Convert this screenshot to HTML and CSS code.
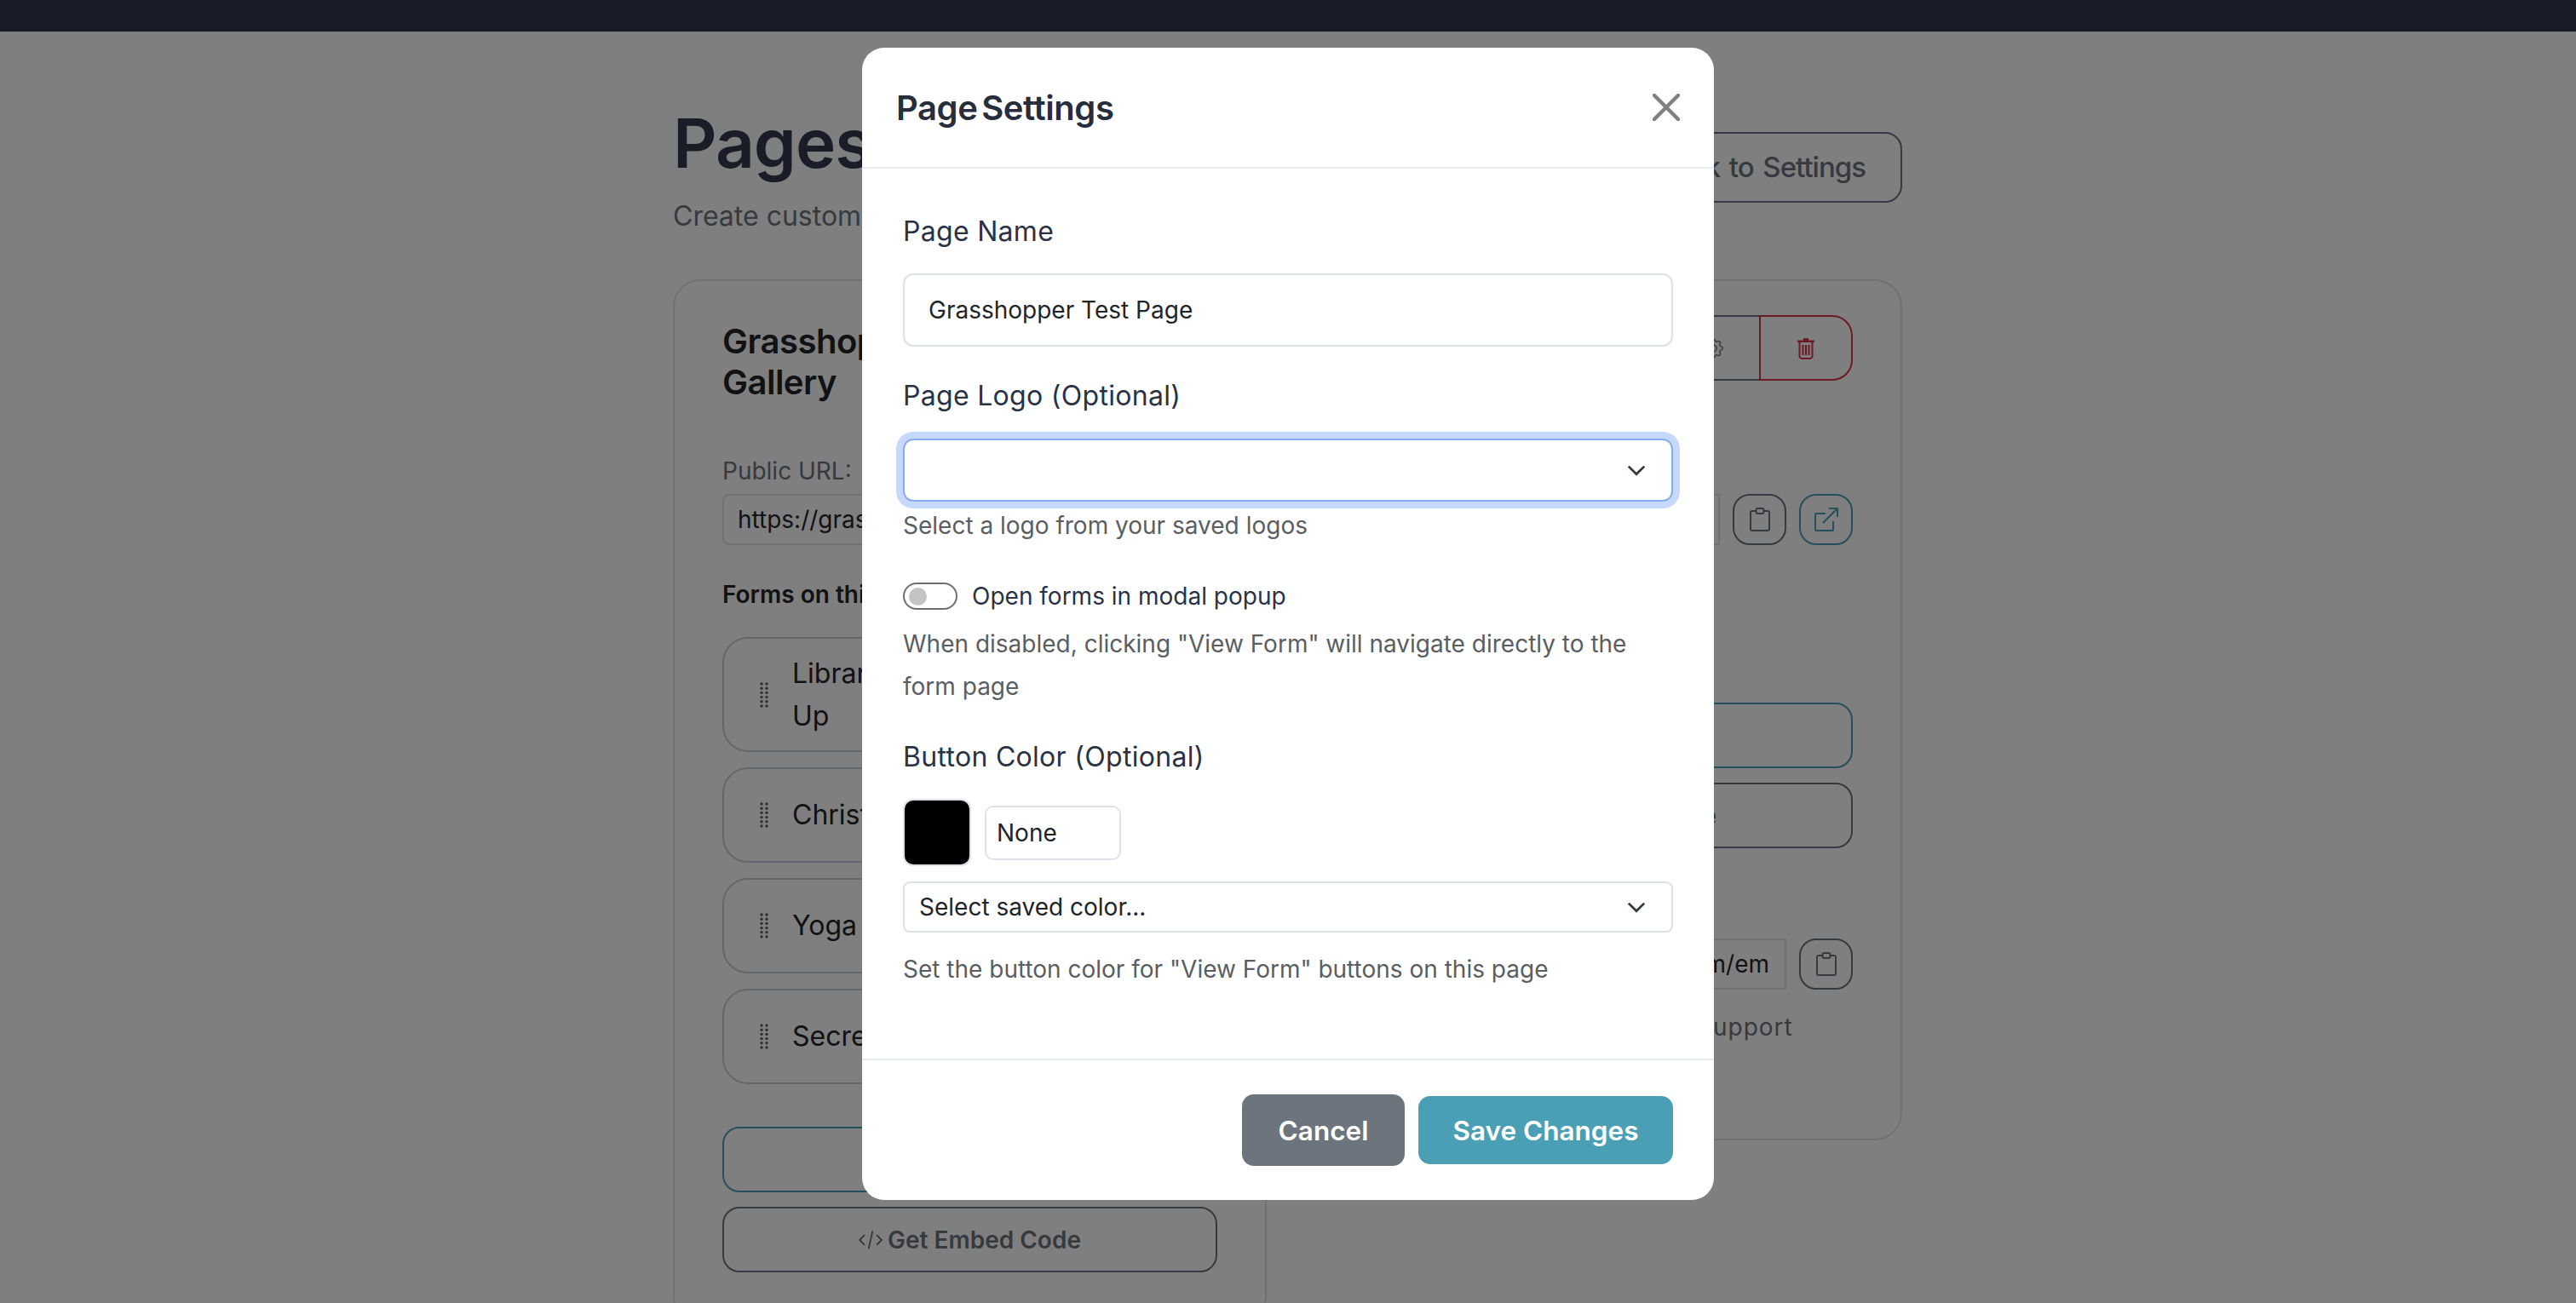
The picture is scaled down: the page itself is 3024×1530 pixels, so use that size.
FILE: index.html
```html
<!DOCTYPE html>
<html lang="en">
<head>
<meta charset="utf-8">
<title>Pages</title>
<link rel="stylesheet" href="styles.css">
</head>
<body>
<nav class="topbar"></nav>
<main class="page">
  <header class="page-head">
    <div>
      <h1 class="page-title">Pages</h1>
      <p class="page-sub">Create custom pages with multiple forms</p>
    </div>
    <a class="btn btn-back">Back to Settings</a>
  </header>
  <section class="cards">
    <article class="card">
      <div class="card-top">
        <h2 class="card-title">Grasshopper Gallery</h2>
        <div class="actions">
          <span class="act"><svg class="ic-gear" viewBox="0 0 16 16"><use href="#gear"/></svg></span>
          <span class="act act-del"><svg class="ic-trash" viewBox="0 0 22 26"><use href="#trash"/></svg></span>
        </div>
      </div>
      <div class="field-label">Public URL:</div>
      <div class="url-row">
        <div class="url-box">https://grasshopper.test/p</div>
        <span class="sq"><svg class="ic-clip" viewBox="0 0 24 28"><use href="#clip"/></svg></span>
        <span class="sq sq-teal"><svg class="ic-open" viewBox="0 0 28 28"><use href="#open"/></svg></span>
      </div>
      <div class="forms-label">Forms on this page:</div>
      <ul class="forms">
        <li class="form-item"><svg class="grip" viewBox="0 0 10 30"><use href="#grip"/></svg><span>Library Card Sign<br>Up</span></li>
        <li class="form-item form-short"><svg class="grip" viewBox="0 0 10 30"><use href="#grip"/></svg><span>Christmas Party</span></li>
        <li class="form-item form-short"><svg class="grip" viewBox="0 0 10 30"><use href="#grip"/></svg><span>Yoga Class</span></li>
        <li class="form-item form-short"><svg class="grip" viewBox="0 0 10 30"><use href="#grip"/></svg><span>Secret Santa</span></li>
      </ul>
      <a class="btn wide wide-teal">View Page</a>
      <a class="btn wide"><svg class="ic-code" viewBox="0 0 24 20"><use href="#code"/></svg>Get Embed Code</a>
    </article>
    <article class="card card-right">
      <div class="card-top">
        <h2 class="card-title">Grasshopper Test Page</h2>
        <div class="actions">
          <span class="act"><svg class="ic-gear" viewBox="0 0 16 16"><use href="#gear"/></svg></span>
          <span class="act act-del"><svg class="ic-trash" viewBox="0 0 22 26"><use href="#trash"/></svg></span>
        </div>
      </div>
      <div class="field-label">Public URL:</div>
      <div class="url-row">
        <div class="url-box">https://grasshopper.test/p</div>
        <span class="sq"><svg class="ic-clip" viewBox="0 0 24 28"><use href="#clip"/></svg></span>
        <span class="sq sq-teal"><svg class="ic-open" viewBox="0 0 28 28"><use href="#open"/></svg></span>
      </div>
      <div class="forms-label">Forms on this page:</div>
      <p class="no-forms">No forms added yet</p>
      <a class="btn wide wide-teal">View Page</a>
      <a class="btn wide"><svg class="ic-code" viewBox="0 0 24 20"><use href="#code"/></svg>Get Embed Code</a>
      <div class="field-label embed-label">Embed URL:</div>
      <div class="url-row">
        <div class="url-box url-embed">https://grasshopper.com/em</div>
        <span class="sq sq-embed"><svg class="ic-clip" viewBox="0 0 24 28"><use href="#clip"/></svg></span>
      </div>
      <p class="embed-note">Paste in your site for iframe support</p>
    </article>
  </section>
</main>

<div class="backdrop">
  <div class="modal">
    <div class="modal-head">
      <h3 class="modal-title">Page Settings</h3>
      <svg class="close" viewBox="0 0 32 32"><path d="M2 2l28 28M30 2L2 30"/></svg>
    </div>
    <div class="modal-body">
      <div class="lbl">Page Name</div>
      <div class="input">Grasshopper Test Page</div>
      <div class="lbl lbl-logo">Page Logo (Optional)</div>
      <div class="select select-focus"><svg class="chev" viewBox="0 0 20 12"><path d="M1.500 1.500L10 10l8.500-8.500"/></svg></div>
      <div class="help help-logo">Select a logo from your saved logos</div>
      <div class="switch-row">
        <span class="switch"><span class="knob"></span></span>
        <span class="switch-text">Open forms in modal popup</span>
      </div>
      <div class="help help-switch">When disabled, clicking "View Form" will navigate directly to the form page</div>
      <div class="lbl lbl-color">Button Color (Optional)</div>
      <div class="color-row">
        <span class="swatch"><span class="swatch-fill"></span></span>
        <span class="color-text">None</span>
      </div>
      <div class="select select-saved">Select saved color...<svg class="chev" viewBox="0 0 20 12"><path d="M1.500 1.500L10 10l8.500-8.500"/></svg></div>
      <div class="help help-color">Set the button color for "View Form" buttons on this page</div>
    </div>
    <div class="modal-foot">
      <a class="mbtn mbtn-cancel">Cancel</a>
      <a class="mbtn mbtn-save">Save Changes</a>
    </div>
  </div>
</div>

<svg class="defs" aria-hidden="true">
  <defs>
    <symbol id="gear" viewBox="0 0 16 16"><path fill="currentColor" d="M8 4.754a3.246 3.246 0 1 0 0 6.492 3.246 3.246 0 0 0 0-6.492zM5.754 8a2.246 2.246 0 1 1 4.492 0 2.246 2.246 0 0 1-4.492 0z"/><path fill="currentColor" d="M9.796 1.343c-.527-1.79-3.065-1.79-3.592 0l-.094.319a.873.873 0 0 1-1.255.52l-.292-.16c-1.64-.892-3.433.902-2.54 2.541l.159.292a.873.873 0 0 1-.52 1.255l-.319.094c-1.79.527-1.79 3.065 0 3.592l.319.094a.873.873 0 0 1 .52 1.255l-.16.292c-.892 1.64.901 3.434 2.541 2.54l.292-.159a.873.873 0 0 1 1.255.52l.094.319c.527 1.79 3.065 1.79 3.592 0l.094-.319a.873.873 0 0 1 1.255-.52l.292.16c1.64.893 3.434-.902 2.54-2.541l-.159-.292a.873.873 0 0 1 .52-1.255l.319-.094c1.79-.527 1.79-3.065 0-3.592l-.319-.094a.873.873 0 0 1-.52-1.255l.16-.292c.893-1.64-.902-3.433-2.541-2.54l-.292.159a.873.873 0 0 1-1.255-.52l-.094-.319zm-2.633.283c.246-.835 1.428-.835 1.674 0l.094.319a1.873 1.873 0 0 0 2.693 1.115l.291-.16c.764-.415 1.6.42 1.184 1.185l-.159.292a1.873 1.873 0 0 0 1.116 2.692l.318.094c.835.246.835 1.428 0 1.674l-.319.094a1.873 1.873 0 0 0-1.115 2.693l.16.291c.415.764-.42 1.6-1.185 1.184l-.291-.159a1.873 1.873 0 0 0-2.693 1.116l-.094.318c-.246.835-1.428.835-1.674 0l-.094-.319a1.873 1.873 0 0 0-2.692-1.115l-.292.16c-.764.415-1.6-.42-1.184-1.185l.159-.291A1.873 1.873 0 0 0 1.945 8.93l-.319-.094c-.835-.246-.835-1.428 0-1.674l.319-.094A1.873 1.873 0 0 0 3.06 4.377l-.16-.292c-.415-.764.42-1.6 1.185-1.184l.292.159a1.873 1.873 0 0 0 2.692-1.115l.094-.319z"/></symbol>
    <symbol id="trash" viewBox="0 0 22 26"><path fill="none" stroke="currentColor" stroke-width="2" d="M3.500 6v16a3 3 0 0 0 3 3h9a3 3 0 0 0 3-3V6M7.500 9v12M11 9v12M14.500 9v12"/><path fill="currentColor" d="M1 3.500h20v2.500H1zM8 1h6v3H8z"/></symbol>
    <symbol id="clip" viewBox="0 0 24 28"><path fill="none" stroke="currentColor" stroke-width="2" d="M7 4H3a2 2 0 0 0-2 2v19a2 2 0 0 0 2 2h18a2 2 0 0 0 2-2V6a2 2 0 0 0-2-2h-4"/><rect x="7.500" y="1" width="9" height="6" rx="2" fill="none" stroke="currentColor" stroke-width="2"/></symbol>
    <symbol id="open" viewBox="0 0 28 28"><path fill="none" stroke="currentColor" stroke-width="2" d="M13 7H2a1 1 0 0 0-1 1v18a1 1 0 0 0 1 1h19a1 1 0 0 0 1-1V16M10 18L27 1M17 1h10v10"/></symbol>
    <symbol id="grip" viewBox="0 0 10 30"><g fill="currentColor"><circle cx="2" cy="2" r="1.700"/><circle cx="8" cy="2" r="1.700"/><circle cx="2" cy="7.200" r="1.700"/><circle cx="8" cy="7.200" r="1.700"/><circle cx="2" cy="12.400" r="1.700"/><circle cx="8" cy="12.400" r="1.700"/><circle cx="2" cy="17.600" r="1.700"/><circle cx="8" cy="17.600" r="1.700"/><circle cx="2" cy="22.800" r="1.700"/><circle cx="8" cy="22.800" r="1.700"/><circle cx="2" cy="28" r="1.700"/><circle cx="8" cy="28" r="1.700"/></g></symbol>
    <symbol id="code" viewBox="0 0 24 20"><path fill="none" stroke="currentColor" stroke-width="1.600" d="M6 5L1 10l5 5M18 5l5 5-5 5M14 1l-4 18"/></symbol>
  </defs>
</svg>
</body>
</html>
```

FILE: styles.css
```css
* { box-sizing: border-box; }
html, body { margin: 0; height: 100%; }
body {
  font-family: Inter, "Noto Sans", sans-serif;
  background: #fff;
  color: #212529;
  overflow: hidden;
}
.defs { width: 0; height: 0; display: block; }
.topbar { height: 37px; background: #303850; }
.page { width: 1444px; margin: 0 auto; padding-right: 1px; }

.page-head {
  display: flex;
  justify-content: space-between;
  align-items: center;
  padding-top: 78px;
  margin-bottom: 51px;
}
.page-title {
  margin: 0;
  font-size: 80px;
  line-height: 106px;
  font-weight: 600;
  letter-spacing: -1px;
  color: #343a50;
}
.page-sub { margin: 10px 0 0; font-size: 32px; line-height: 46px; color: #6c757d; }
.btn {
  display: flex;
  align-items: center;
  justify-content: center;
  border: 2px solid #6c757d;
  border-radius: 20px;
  color: #6c757d;
  font-weight: 500;
}
.btn-back { height: 83px; padding: 0 41px; font-size: 33px; letter-spacing: -1px; word-spacing: 3px; }

.cards { display: grid; grid-template-columns: 697px 697px; gap: 49px; align-items: start; }
.card { border: 2px solid #dee2e6; border-radius: 32px; padding: 40px 56px 58px; }
.card-top { display: flex; justify-content: space-between; gap: 20px; }
.card-title { margin: 7px 0 0; font-size: 40px; line-height: 48px; font-weight: 600; letter-spacing: -.5px; }
.actions { display: flex; flex: none; height: 77px; }
.act {
  width: 110px;
  display: flex;
  align-items: center;
  justify-content: center;
  border: 2px solid #6c757d;
  border-right: 0;
  border-radius: 24px 0 0 24px;
  color: #6c757d;
}
.act-del { border: 2px solid #dc3545; border-radius: 0 24px 24px 0; color: #dc3545; }
.ic-gear { width: 24px; height: 24px; }
.ic-trash { width: 22px; height: 26px; }

.field-label { margin: 60px 0 7px; font-size: 28px; line-height: 40px; color: #6c757d; }
.url-row { display: flex; gap: 15px; height: 60px; }
.url-box {
  flex: 1;
  min-width: 0;
  border: 2px solid #dee2e6;
  border-radius: 8px 0 0 8px;
  padding: 0 16px;
  display: flex;
  align-items: center;
  font-size: 28px;
  white-space: nowrap;
  overflow: hidden;
}
.sq {
  flex: none;
  width: 63px;
  display: flex;
  align-items: center;
  justify-content: center;
  border: 2px solid #6c757d;
  border-radius: 20px;
  color: #6c757d;
}
.sq-teal { border-color: #4a9fb5; color: #4a9fb5; }
.ic-clip { width: 24px; height: 28px; }
.ic-open { width: 28px; height: 28px; }

.forms-label { margin: 38px 0 30px; font-size: 28px; line-height: 40px; font-weight: 600; }
.forms { list-style: none; margin: 0 0 50px; padding: 0; display: flex; flex-direction: column; gap: 18px; }
.form-item {
  height: 135px;
  border: 2px solid #c9ced2;
  border-radius: 30px;
  display: flex;
  align-items: center;
  gap: 28px;
  padding-left: 42px;
  font-size: 32px;
  line-height: 50px;
}
.form-short { height: 112px; }
.grip { width: 10px; height: 30px; color: #5a6268; flex: none; }

.wide { height: 77px; font-size: 28px; font-weight: 600; margin-bottom: 17px; }
.wide:last-child { margin-bottom: 0; }
.wide-teal { border-color: #4a9fb5; color: #4a9fb5; }
.ic-code { width: 28px; height: 24px; margin-right: 6px; }

.no-forms { margin: 0; height: 77px; font-size: 28px; color: #6c757d; }
.embed-label { margin: 58px 0 0; height: 48px; }
.url-embed { border-radius: 0; flex: none; width: 503px; justify-content: flex-end; padding: 0 18px; }
.embed-note { margin: 24px 0 0; font-size: 28px; line-height: 40px; color: #6c757d; white-space: nowrap; letter-spacing: 1px; padding-bottom: 53px; }

.backdrop {
  position: fixed;
  inset: 0;
  background: rgba(0,0,0,.5);
  display: flex;
  justify-content: center;
  align-items: flex-start;
  padding-top: 56px;
}
.modal { width: 1000px; background: #fff; border-radius: 26px; }
.modal-head {
  height: 142px;
  border-bottom: 2px solid #e9ecef;
  display: flex;
  align-items: center;
  justify-content: space-between;
  padding: 0 40px;
}
.modal-title {
  margin: 0;
  font-size: 40px;
  font-weight: 600;
  letter-spacing: -.4px;
  word-spacing: -5px;
  color: #262d3d;
}
.close { width: 32px; height: 32px; fill: none; stroke: #808080; stroke-width: 4.5; stroke-linecap: round; }
.modal-body { padding: 48px 48px 80px; }
.lbl { font-size: 32px; line-height: 52px; font-weight: 400; letter-spacing: .3px; color: #2a3245; margin-bottom: 23px; }
.lbl-logo { margin: 32px 0 24px; }
.lbl-color { margin: 32px 0 23px; }
.input {
  height: 86px;
  border: 2px solid #dee2e6;
  border-radius: 12px;
  display: flex;
  align-items: center;
  padding: 0 28px;
  font-size: 28px;
}
.select {
  height: 74px;
  border: 2px solid #dee2e6;
  border-radius: 12px;
  display: flex;
  align-items: center;
  justify-content: space-between;
  padding: 0 30px 0 17px;
  font-size: 28px;
}
.select-focus { border-color: #86a9f0; box-shadow: 0 0 0 8px #c6d9fc; justify-content: flex-end; }
.select-saved { height: 60px; margin-top: 18px; border-radius: 8px; }
.chev { width: 22px; height: 13px; fill: none; stroke: #343a40; stroke-width: 2.6; }
.help { font-size: 28px; line-height: 50px; color: #5a5e62; }
.help-logo { margin-top: 3px; }
.help-switch { margin-top: 6px; }
.help-color { margin-top: 18px; }
.switch-row { display: flex; align-items: center; margin-top: 33px; height: 50px; gap: 17px; }
.switch {
  width: 64px;
  height: 32px;
  flex: none;
  border: 2px solid #6e6e6e;
  border-radius: 16px;
  display: flex;
  align-items: center;
  padding-left: 5px;
}
.knob { width: 21px; height: 21px; border-radius: 50%; background: #c4c4c4; }
.switch-text { font-size: 28px; color: #2a3245; }
.color-row { display: flex; align-items: center; gap: 16px; height: 79px; }
.swatch {
  width: 80px;
  height: 79px;
  border: 2px solid #dee2e6;
  border-radius: 12px;
  flex: none;
}
.swatch-fill { display: block; height: 100%; background: #000; border-radius: 10px; }
.color-text {
  width: 160px;
  height: 64px;
  border: 2px solid #dee2e6;
  border-radius: 10px;
  display: flex;
  align-items: center;
  padding: 0 12px;
  font-size: 28px;
}
.modal-foot {
  border-top: 2px solid #e9ecef;
  display: flex;
  justify-content: flex-end;
  align-items: center;
  gap: 16px;
  padding: 40px 48px;
}
.mbtn {
  display: flex;
  align-items: center;
  justify-content: center;
  color: #fff;
  font-size: 31.5px;
  font-weight: 600;
  border-radius: 14px;
}
.mbtn-cancel { width: 191px; height: 84px; background: #6c757d; }
.mbtn-save { width: 299px; height: 80px; background: #4a9fb5; }
```
